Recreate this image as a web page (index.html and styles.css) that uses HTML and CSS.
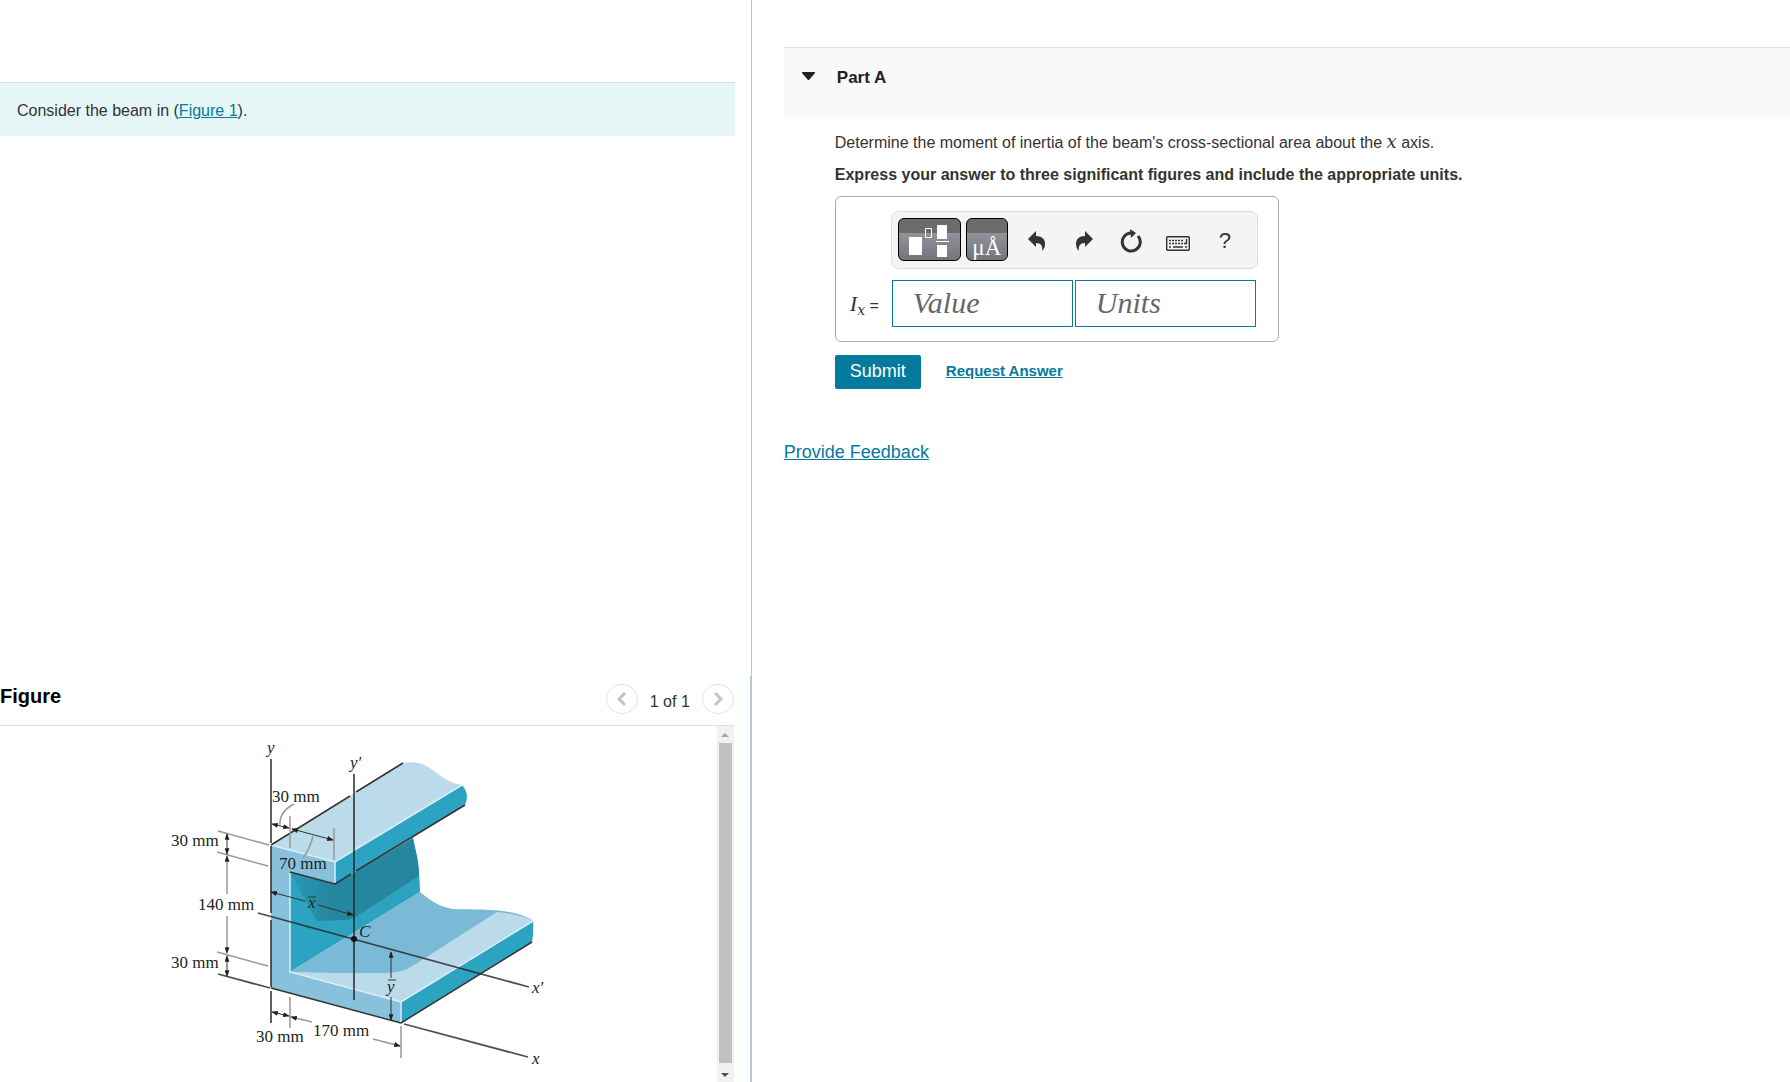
FILE: index.html
```
<!DOCTYPE html>
<html lang="en">
<head>
    <meta charset="UTF-8">
    <meta name="viewport" content="width=device-width, initial-scale=1.0">
    <title>Moment of Inertia</title>
    <link rel="stylesheet" href="styles.css">
</head>
<body>
    <section class="left-panel">
        <div class="intro">Consider the beam in (<a href="#figure">Figure 1</a>).</div>
        <div class="figure-panel" id="figure">
            <div class="figure-header">
                <h2>Figure</h2>
                <div class="pager">
                    <button type="button" aria-label="Previous figure"><svg width="10" height="14" viewBox="0 0 10 14"><path d="M8 1 2 7l6 6"/></svg></button>
                    <span>1 of 1</span>
                    <button type="button" aria-label="Next figure"><svg width="10" height="14" viewBox="0 0 10 14"><path d="M2 1l6 6-6 6"/></svg></button>
                </div>
            </div>
            <div class="figure-view">
                <div class="figure-image">
                    <svg class="beam" width="390" height="345" viewBox="163 730 390 345">
                        <defs>
                            <marker id="arrow" viewBox="0 0 8 6" refX="7" refY="3" markerWidth="7" markerHeight="5" markerUnits="userSpaceOnUse" orient="auto-start-reverse"><path d="M0 0l8 3-8 3z" fill="#231f20"/></marker>
                            <linearGradient id="shade" x1="0" x2="1">
                                <stop offset="0" stop-color="#2a9ab7"/>
                                <stop offset=".3" stop-color="#24879f"/>
                            </linearGradient>
                        </defs>
                        <!-- web -->
                        <path fill="#2ca3c1" d="M290 872l45 12 78-46c2 14 7 26 7 54l-130 80z"/>
                        <path fill="url(#shade)" d="M290 873l45 11 78-46c2 12 6 20 6 38l-62 40q-6 4-12 4l-28 1q-13-24-27-48z"/>
                        <!-- bottom flange -->
                        <path fill="#7bbad7" d="M290 972l130-80c12 10 21 15 33 17 18 1 62-2 80 12l-132 81z"/>
                        <path fill="#bcdbea" d="M290 972l50 1h45q18 0 29-8l83-53q26 3 36 9l-132 81z"/>
                        <path fill="#2ca3c1" d="M401 1002l132-81q1 11-1 21l-131 81z"/>
                        <!-- top flange -->
                        <path fill="#bcdbea" d="M271 845l132-82c30-5 32 18 59 22l-127 77z"/>
                        <path fill="#2ca3c1" d="M335 862l127-77q8 9 3 20l-130 79z"/>
                        <!-- front face -->
                        <path fill="#88c1dc" d="M271 845l64 17v22l-45-12v100l111 30v21l-130-35z"/>
                        <path class="edge-light" d="M271 845l64 17 127-77M335 862v22M290 873v99l111 30 132-81M401 1002v21"/>
                        <path class="edge" d="M271 845l79-49M356 792l47-29M290 872l45 12 16-10M356 871l109-66M413 838M401 1023l131-81M271 988l130 35"/>
                        <!-- axes -->
                        <path class="axis" d="M271 759v84M271 846v67M271 920v67M271 991v32M354 774v226M258 913l271 74M404 1024l124 33M218 974l52 14"/>
                        <circle cx="354" cy="939" r="3" fill="#111"/>
                        <!-- dimensions -->
                        <path class="guide" d="M290 816v32M334 828v32M218 831l51 14M217 852l51 14M217 952l51 14M290 997v31M401 1026v32M294 804q-15 8-14 21M313 836q-3 13-10 22"/>
                        <path class="guide" d="M227 856v38M227 916v37M291 1017l21 5M373 1039l27 7"/>
                        <g class="dim">
                            <path d="M272 824l17 4" marker-start="url(#arrow)" marker-end="url(#arrow)"/>
                            <path d="M292 829l41 11" marker-start="url(#arrow)" marker-end="url(#arrow)"/>
                            <path d="M227 834v20" marker-start="url(#arrow)" marker-end="url(#arrow)"/>
                            <path d="M227 956v20" marker-start="url(#arrow)" marker-end="url(#arrow)"/>
                            <path d="M272 1012l17 4" marker-start="url(#arrow)" marker-end="url(#arrow)"/>
                            <path d="M227 894v-38" stroke="none" marker-end="url(#arrow)"/>
                            <path d="M227 916v37" stroke="none" marker-end="url(#arrow)"/>
                            <path d="M312 1022l-21-5" stroke="none" marker-end="url(#arrow)"/>
                            <path d="M373 1039l27 7" stroke="none" marker-end="url(#arrow)"/>
                            <path d="M305 901l-34-9" marker-end="url(#arrow)"/>
                            <path d="M318 905l35 10" marker-end="url(#arrow)"/>
                            <path d="M391 978v-26" marker-end="url(#arrow)"/>
                            <path d="M391 997v23" marker-end="url(#arrow)"/>
                            <path d="M308 897h8M388 980h8"/>
                        </g>
                        <g class="label">
                            <text x="272" y="802">30 mm</text>
                            <text x="171" y="846">30 mm</text>
                            <text x="279" y="869">70 mm</text>
                            <text x="198" y="910">140 mm</text>
                            <text x="171" y="968">30 mm</text>
                            <text x="256" y="1042">30 mm</text>
                            <text x="313" y="1036">170 mm</text>
                        </g>
                        <g class="label symbol">
                            <text x="267" y="753">y</text>
                            <text x="350" y="768">y′</text>
                            <text x="308" y="908">x</text>
                            <text x="387" y="992">y</text>
                            <text x="359" y="937">C</text>
                            <text x="532" y="993">x′</text>
                            <text x="532" y="1064">x</text>
                        </g>
                    </svg>
                </div>
                <div class="scrollbar">
                    <span class="arrow-up"></span>
                    <span class="thumb"></span>
                    <span class="arrow-down"></span>
                </div>
            </div>
        </div>
    </section>

    <main class="right-panel">
        <header class="part-header">
            <svg width="13" height="8" viewBox="0 0 13 8"><path fill="#222" d="M0 0h13v1L7 8H6L0 1z"/></svg>
            <h2>Part A</h2>
        </header>
        <form class="part-body">
            <p>Determine the moment of inertia of the beam's cross-sectional area about the <span class="math">𝑥</span> axis.</p>
            <p class="instruction">Express your answer to three significant figures and include the appropriate units.</p>
            <div class="answer-box">
                <div class="toolbar">
                    <button type="button" class="dark templates" aria-label="Templates">
                        <svg width="40" height="33" viewBox="0 0 40 33">
                            <path fill="#fff" d="M0 12h13v18H0zM28 0h10v14H28zM28 20h10v12H28zM27 16h13v1H27z"/>
                            <path fill="none" stroke="#fff" d="M16.500 3.500h6v9h-6z"/>
                        </svg>
                    </button>
                    <button type="button" class="dark units" aria-label="Symbols">μÅ</button>
                    <button type="button" class="tool" aria-label="Undo"><svg width="18" height="20" viewBox="0 0 18 20"><path d="M0 8 8 0v5c6 0 9 3 9 8 0 3-1 5-3 7 1-5-1-8-6-8v4z"/></svg></button>
                    <button type="button" class="tool" aria-label="Redo"><svg width="18" height="20" viewBox="0 0 18 20"><path d="M18 8 10 0v5c-6 0-9 3-9 8 0 3 1 5 3 7-1-5 1-8 6-8v4z"/></svg></button>
                    <button type="button" class="tool" aria-label="Reset"><svg width="22" height="24" viewBox="0 0 22 24"><path fill="none" stroke="#333" stroke-width="3" d="M18 7a9 9 0 1 1-7-3"/><path d="M10 0l6 4-5 5z"/></svg></button>
                    <button type="button" class="tool" aria-label="Keyboard shortcuts"><svg class="keyboard" width="24" height="15" viewBox="0 0 24 15"><rect x=".7" y=".7" width="22.600" height="13.600" rx="1"/><path stroke-dasharray="2 1" d="M3 4.500h15M3 7.500h14"/><path d="M3 11h2M7 11h10M19 11h2M18 7.500h2.500V3"/></svg></button>
                    <button type="button" class="tool help" aria-label="Help">?</button>
                </div>
                <div class="answer-row">
                    <label for="value"><i>I</i><sub class="math">𝑥</sub> =</label>
                    <input id="value" type="text" placeholder="Value">
                    <input id="units" type="text" placeholder="Units" aria-label="Units">
                </div>
            </div>
            <div class="actions">
                <button type="button" class="submit">Submit</button>
                <a href="#">Request Answer</a>
            </div>
        </form>
        <a class="feedback" href="#">Provide Feedback</a>
    </main>
</body>
</html>
```
FILE: styles.css
```
* {
    box-sizing: border-box;
}
body {
    margin: 0;
    display: flex;
    min-height: 100vh;
    font-family: "Liberation Sans", Arial, sans-serif;
    font-size: 16px;
    color: #333;
    background: #fff;
}
a {
    color: #047a9c;
}
h2, p {
    margin: 0;
}
button {
    font-family: inherit;
    padding: 0;
    border: none;
    background: none;
    cursor: pointer;
}

/* left side */
.left-panel {
    width: 42%;
    height: 100vh;
    display: flex;
    flex-direction: column;
    justify-content: space-between;
    padding-top: 82px;
    border-right: 1px solid #b9c4cf;
}
.intro {
    margin-right: 16px;
    padding: 19px 17px 16px;
    line-height: 18px;
    border-top: 1px solid #d5dddd;
    background: #e6f6f6;
}
.figure-panel {
    height: 406px;
    display: flex;
    flex-direction: column;
    padding-right: 16px;
    border-right: 1px solid #b8cde0;
}
.figure-header {
    display: flex;
    justify-content: space-between;
    height: 50px;
    padding-top: 8px;
    border-bottom: 1px solid #ddd;
}
.figure-header h2 {
    font-size: 20px;
    line-height: 24px;
    color: #000;
}
.pager {
    display: flex;
    align-items: flex-start;
    gap: 12px;
}
.pager span {
    line-height: 36px;
}
.pager button {
    display: flex;
    align-items: center;
    justify-content: center;
    width: 32px;
    height: 30px;
    border: 1px solid #e2e2e2;
    border-radius: 50%;
}
.pager path {
    fill: none;
    stroke: #c4c4c4;
    stroke-width: 3;
}
.figure-view {
    flex: 1;
    display: flex;
    min-height: 0;
}
.figure-image {
    flex: 1;
    padding-top: 4px;
    text-align: center;
    overflow: hidden;
}
.scrollbar {
    display: flex;
    flex-direction: column;
    align-items: center;
    width: 17px;
    padding: 7px 0 5px;
    background: #f1f1f1;
}
.thumb {
    flex: 1;
    width: 13px;
    margin: 6px 0 10px;
    background: #c1c1c1;
}
.arrow-up, .arrow-down {
    border: 4px solid transparent;
}
.arrow-up {
    border-top: none;
    border-bottom-color: #a3a3a3;
}
.arrow-down {
    border-bottom: none;
    border-top-color: #505050;
}

/* beam drawing */
.edge, .edge-light, .axis, .guide, .dim {
    fill: none;
}
.edge {
    stroke: #333;
    stroke-width: 1.5;
}
.edge-light {
    stroke: #d9eff8;
    stroke-width: 1.5;
}
.axis {
    stroke: #222;
    stroke-opacity: 0.8;
    stroke-width: 1.8;
}
.guide {
    stroke: #999;
    stroke-width: 1.5;
}
.dim {
    stroke: #333;
}
.label {
    font-family: "Liberation Serif", "Times New Roman", serif;
    font-size: 17px;
    fill: #231f20;
}
.symbol {
    font-style: italic;
}

/* right side */
.right-panel {
    flex: 1;
    padding: 47px 0 0 32px;
}
.part-header {
    display: flex;
    align-items: flex-start;
    gap: 22px;
    height: 72px;
    padding: 19px 18px;
    border-top: 1px solid #ddd;
    background: #f9f9f9;
}
.part-header svg {
    margin-top: 5px;
}
.part-header h2 {
    font-size: 17px;
    line-height: 22px;
    color: #222;
}
.part-body {
    padding: 12px 0 0 51px;
}
.part-body p {
    line-height: 24px;
    margin-bottom: 8px;
}
.math {
    font-family: "DejaVu Serif", serif;
    font-size: 18px;
    line-height: 1;
}
.instruction {
    font-weight: bold;
}
.answer-box {
    width: 444px;
    margin-top: 9px;
    padding: 14px 20px 14px 14px;
    border: 1px solid #aaa;
    border-radius: 6px;
}
.toolbar {
    display: flex;
    align-items: center;
    height: 58px;
    margin-left: 41px;
    padding: 0 6px;
    border: 1px solid #ddd;
    border-radius: 8px;
    background: #f4f4f4;
}
.dark {
    height: 43px;
    margin: 0 5px 1px 0;
    border: 1px solid #000;
    border-radius: 6px;
    background: linear-gradient(#6c6c6c 0, #6c6c6c 34%, #92929b 35%, #74747c 100%);
    color: #fff;
}
.templates {
    width: 63px;
    padding-top: 6px;
}
.units {
    width: 42px;
    padding-top: 16px;
    font-family: "Liberation Serif", serif;
    font-size: 23px;
    line-height: 24px;
}
.tool {
    display: flex;
    align-items: center;
    justify-content: center;
    width: 47px;
    height: 43px;
    padding: 2px 0 0 1px;
    color: #333;
}
.tool path {
    fill: #333;
}
.tool path[stroke] {
    fill: none;
}
.keyboard {
    margin-top: 5px;
}
.keyboard rect, .keyboard path {
    fill: none;
    stroke: #333;
    stroke-width: 1.4;
}
.help {
    font-size: 22px;
}
.answer-row {
    display: flex;
    align-items: center;
    gap: 2px;
    margin: 11px 2px 0 0;
}
.answer-row label {
    width: 40px;
    font-size: 16px;
    white-space: nowrap;
}
.answer-row label i {
    font-family: "Liberation Serif", serif;
    font-size: 22px;
}
.answer-row sub {
    font-size: 14px;
    line-height: 12px;
}
.answer-row input {
    flex: 1;
    min-width: 0;
    height: 47px;
    padding: 0 20px 2px;
    border: 1px solid #047a9c;
    font-family: "Liberation Serif", serif;
    font-size: 30px;
    font-style: italic;
}
.answer-row input::placeholder {
    color: #666;
}
.actions {
    display: flex;
    gap: 25px;
    margin-top: 13px;
}
.submit {
    width: 86px;
    height: 34px;
    padding-bottom: 2px;
    border-radius: 2px;
    background: #047a9c;
    color: #fff;
    font-size: 18px;
}
.actions a {
    font-size: 15px;
    line-height: 31px;
    font-weight: bold;
}
.feedback {
    display: inline-block;
    margin-top: 52px;
    font-size: 18px;
    line-height: 22px;
}
```
